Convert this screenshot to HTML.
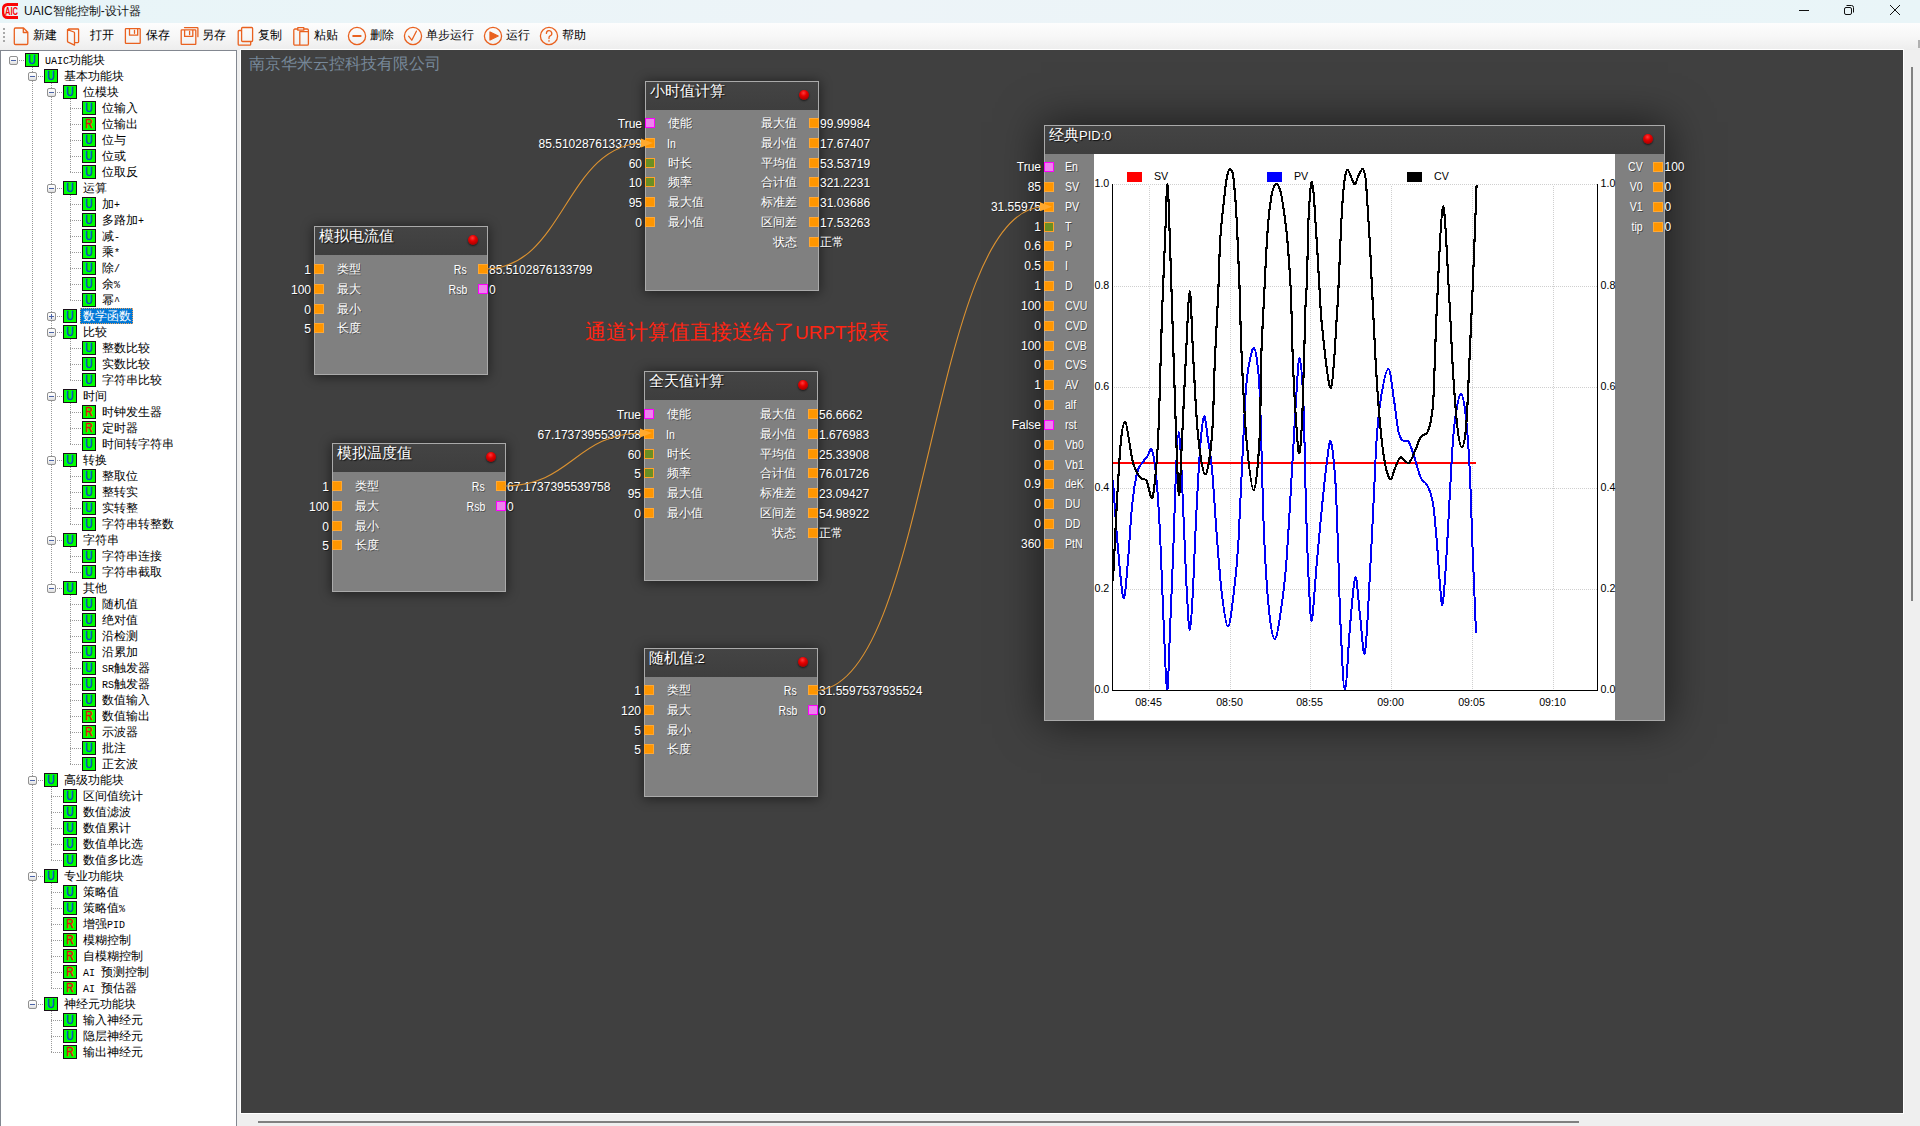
<!DOCTYPE html>
<html><head><meta charset="utf-8"><title>UAIC</title><style>
*{box-sizing:border-box;margin:0;padding:0}
html,body{width:1920px;height:1126px;overflow:hidden;background:#efefef;font-family:"Liberation Sans",sans-serif;font-size:12px;color:#000}
.abs{position:absolute}
#title{position:absolute;left:0;top:0;width:1920px;height:23px;background:linear-gradient(90deg,#e8f5f8,#edf4f8 45%,#e9f5f8)}
#title .t{position:absolute;top:4px;font-size:12px;line-height:15px;color:#111;white-space:nowrap}
#tb{position:absolute;left:0;top:23px;width:1920px;height:27px;background:linear-gradient(#fdfdfd,#f7f7f7 50%,#ededed)}
#tb .l{position:absolute;top:5px;font-size:12px;line-height:15px;color:#000;white-space:nowrap}
#tree{position:absolute;left:0;top:50px;width:237px;height:1080px;background:#fff;border:1px solid #828790}
.tr span{font-family:"Liberation Mono",monospace;font-size:10px}
.tr{position:absolute;height:16px;line-height:16px;font-size:12px;white-space:nowrap;color:#000}
.ic{position:absolute;width:14px;height:14px;background:#00ff00;border:1px solid #1a0f1a;color:#0a46c8;overflow:hidden}
.ic span{display:block;width:12px;font-size:13px;line-height:12px;text-align:center;transform:scaleX(.8);-webkit-text-stroke:.55px}
.ic.r{color:#e01010}
.ex{position:absolute;width:9px;height:9px;border:1px solid #919191;border-radius:2px;background:linear-gradient(#fff,#f4f4f4 50%,#dedede)}
.ex i{position:absolute;left:1px;top:3px;width:5px;height:1px;background:#4b63a7}
.ex b{position:absolute;left:3px;top:1px;width:1px;height:5px;background:#4b63a7}
#cv{position:absolute;left:240px;top:49px;width:1664px;height:1065px;border:1px solid #fff;background:#404040}
.node{position:absolute;border:1px solid #aaa;background:#808080;box-shadow:0 1px 11px 1px rgba(0,0,0,.48)}
.node .hd{position:absolute;left:0;top:0;right:0;height:28px;background:linear-gradient(#444,#3e3e3e)}
.nt{position:absolute;color:#fff;font-size:14.67px;line-height:18px;white-space:nowrap;text-shadow:1px 1px 1px rgba(0,0,0,.8)}
.ball{position:absolute;width:10px;height:10px;border-radius:50%;background:radial-gradient(circle at 45% 30%,#ff3a3a 0,#e60000 35%,#a80000 75%,#7a0000 100%);box-shadow:0 1px 2px rgba(0,0,0,.6)}
.p{position:absolute;width:10px;height:10px;background:#ff9600;border:1px solid #ffa834}
.p.m{background:#ee82ee;border-color:#ff00ff}
.p.g{background:#6b8e23;border-color:#ffa22c}
.tx{position:absolute;color:#fff;font-size:12px;line-height:14px;white-space:nowrap;text-shadow:1px 1px 0 rgba(0,0,0,.45)}
.tx.r{text-align:right}
.j{text-align-last:justify;text-justify:inter-character}
.tx.n{transform:scaleX(.88);transform-origin:0 50%}
.tx.n.r{transform-origin:100% 50%}
.nt span{font-size:13px}
</style></head><body>
<div id="title">
<svg class="abs" style="left:0;top:0" width="22" height="23" viewBox="0 0 22 23"><path d="M18 3H7.5A5.500 5.500 0 0 0 2 8.500V13.500A5.500 5.500 0 0 0 7.500 19H18V16H8A3.700 3.700 0 0 1 4.300 12.500V9.500A3.700 3.700 0 0 1 8 6H18z" fill="#fa0505"/><text x="5" y="14.700" font-family="Liberation Sans, sans-serif" font-size="10.500" font-weight="bold" fill="#fa0505" textLength="13" lengthAdjust="spacingAndGlyphs">AIC</text></svg>
<div class="t j" style="left:24px;width:116.67px">UAIC智能控制-设计器</div>
<svg class="abs" style="left:1780px;top:0" width="140" height="23" viewBox="0 0 140 23" fill="none" stroke="#111" stroke-width="1"><path d="M19 10.5h10"/><rect x="64.5" y="7.5" width="7" height="7" rx="1.5"/><path d="M66.5 5.5h5a2 2 0 0 1 2 2v5"/><path d="M110 5l10 10M120 5l-10 10"/></svg>
</div>
<div id="tb">
<svg class="abs" style="left:0;top:0" width="10" height="27"><g fill="#a8a8a8"><rect x="3" y="5" width="2" height="2"/><rect x="3" y="9" width="2" height="2"/><rect x="3" y="13" width="2" height="2"/><rect x="3" y="17" width="2" height="2"/></g></svg>
<svg class="abs" style="left:0;top:0" width="620" height="27" viewBox="0 23 620 27" fill="none" stroke="#e9611f" stroke-width="1.3" stroke-linejoin="round" stroke-linecap="round">
<path d="M15.5 28h8l4.3 4.3v11a1.2 1.2 0 0 1-1.2 1.2h-11.1a1.2 1.2 0 0 1-1.2-1.2v-14.1a1.2 1.2 0 0 1 1.2-1.2zM23.3 28.2v4.3h4.3"/>
<path d="M68.5 29h9.3a.8.8 0 0 1 .8.8v12a.8.8 0 0 1-.8.8h-3.3M67.5 29.6l6.4 2.4a.9.9 0 0 1 .6.8v12.4l-6.4-3a1 1 0 0 1-.6-.9z"/>
<path d="M126 28.6h13.6a.6.6 0 0 1 .6.6v13.6a.6.6 0 0 1-.6.6h-13.600a.6.6 0 0 1-.6-.6v-13.600a.6.6 0 0 1 .6-.6zM129.500 28.800v6.400h8.200v-6.400M134.500 30.300v3"/>
<path d="M181.800 29.800h13.400a.6.6 0 0 1 .6.600v13.400a.6.6 0 0 1-.6.600h-13.400a.6.6 0 0 1-.6-.6v-13.400a.6.6 0 0 1 .6-.6zM184.600 30v6.400h8.200v-6.400M189.600 31.500v3M184.500 27.600h12.800a.6.6 0 0 1 .6.600v8.500" />
<path d="M241.400 30.500h-2.200a1 1 0 0 0-1 1v12.700a1 1 0 0 0 1 1h10.500a1 1 0 0 0 1-1v-2.300M242.600 27.500h9a1 1 0 0 1 1 1v12a1 1 0 0 1-1 1h-9a1 1 0 0 1-1-1v-12a1 1 0 0 1 1-1z"/>
<path d="M297.600 29h-2.600a1.200 1.200 0 0 0-1.200 1.200v13.800a1.200 1.200 0 0 0 1.200 1.200h12.200a1.200 1.200 0 0 0 1.200-1.200v-13.800a1.200 1.200 0 0 0-1.200-1.200h-3M297.800 27.600h6v2.600h-6zM299.800 45v-13.400h8.400"/>
<circle cx="357" cy="36" r="8.6"/><path d="M353.200 36h7.400" stroke-width="2"/>
<circle cx="413" cy="36" r="8.600"/><path d="M408.600 36.200l3.200 4 4.600-9"/>
<circle cx="493" cy="36" r="8.600"/><path d="M490 32v8l8.200-4z" fill="#e9611f"/>
<circle cx="549" cy="36" r="8.600"/><path d="M546.400 33.400a2.700 2.700 0 1 1 3.700 2.500c-.8.400-1.100.9-1.100 1.800v.8M549 40.600v.6"/>
</svg>
<div class="l j" style="left:33px;width:24px">新建</div>
<div class="l j" style="left:89.5px;width:24px">打开</div>
<div class="l j" style="left:146px;width:24px">保存</div>
<div class="l j" style="left:202px;width:24px">另存</div>
<div class="l j" style="left:258px;width:24px">复制</div>
<div class="l j" style="left:313.5px;width:24px">粘贴</div>
<div class="l j" style="left:370px;width:24px">删除</div>
<div class="l j" style="left:426px;width:48px">单步运行</div>
<div class="l j" style="left:506px;width:24px">运行</div>
<div class="l j" style="left:562px;width:24px">帮助</div>
<div class="abs" style="left:1918px;top:17px;width:2px;height:8px;background:#b0b0b0"></div>
</div>
<div id="tree">
<svg class="abs" style="left:0;top:0" width="235" height="1074" fill="none" stroke="#9a9a9a" stroke-width="1" stroke-dasharray="1 1" shape-rendering="crispEdges"><path d="M18 9.5H23"/><path d="M31.5 16V954"/><path d="M37 25.5H42"/><path d="M50.5 32V538"/><path d="M56 41.5H61"/><path d="M69.5 48V122"/><path d="M69 57.5H80"/><path d="M69 73.5H80"/><path d="M69 89.5H80"/><path d="M69 105.5H80"/><path d="M69 121.5H80"/><path d="M56 137.5H61"/><path d="M69.5 144V250"/><path d="M69 153.5H80"/><path d="M69 169.5H80"/><path d="M69 185.5H80"/><path d="M69 201.5H80"/><path d="M69 217.5H80"/><path d="M69 233.5H80"/><path d="M69 249.5H80"/><path d="M56 265.5H61"/><path d="M56 281.5H61"/><path d="M69.5 288V330"/><path d="M69 297.5H80"/><path d="M69 313.5H80"/><path d="M69 329.5H80"/><path d="M56 345.5H61"/><path d="M69.5 352V394"/><path d="M69 361.5H80"/><path d="M69 377.5H80"/><path d="M69 393.5H80"/><path d="M56 409.5H61"/><path d="M69.5 416V474"/><path d="M69 425.5H80"/><path d="M69 441.5H80"/><path d="M69 457.5H80"/><path d="M69 473.5H80"/><path d="M56 489.5H61"/><path d="M69.5 496V522"/><path d="M69 505.5H80"/><path d="M69 521.5H80"/><path d="M56 537.5H61"/><path d="M69.5 544V714"/><path d="M69 553.5H80"/><path d="M69 569.5H80"/><path d="M69 585.5H80"/><path d="M69 601.5H80"/><path d="M69 617.5H80"/><path d="M69 633.5H80"/><path d="M69 649.5H80"/><path d="M69 665.5H80"/><path d="M69 681.5H80"/><path d="M69 697.5H80"/><path d="M69 713.5H80"/><path d="M37 729.5H42"/><path d="M50.5 736V810"/><path d="M50 745.5H61"/><path d="M50 761.5H61"/><path d="M50 777.5H61"/><path d="M50 793.5H61"/><path d="M50 809.5H61"/><path d="M37 825.5H42"/><path d="M50.5 832V938"/><path d="M50 841.5H61"/><path d="M50 857.5H61"/><path d="M50 873.5H61"/><path d="M50 889.5H61"/><path d="M50 905.5H61"/><path d="M50 921.5H61"/><path d="M50 937.5H61"/><path d="M37 953.5H42"/><path d="M50.5 960V1002"/><path d="M50 969.5H61"/><path d="M50 985.5H61"/><path d="M50 1001.5H61"/></svg>
<div class="ex" style="left:8px;top:5px"><i></i></div>
<div class="ic" style="left:24px;top:2px"><span>U</span></div>
<div class="tr j" style="left:44px;top:1px;width:60.02px"><span>UAIC</span>功能块</div>
<div class="ex" style="left:27px;top:21px"><i></i></div>
<div class="ic" style="left:43px;top:18px"><span>U</span></div>
<div class="tr j" style="left:63px;top:17px;width:60px">基本功能块</div>
<div class="ex" style="left:46px;top:37px"><i></i></div>
<div class="ic" style="left:62px;top:34px"><span>U</span></div>
<div class="tr j" style="left:82px;top:33px;width:36px">位模块</div>
<div class="ic" style="left:81px;top:50px"><span>U</span></div>
<div class="tr j" style="left:101px;top:49px;width:36px">位输入</div>
<div class="ic r" style="left:81px;top:66px"><span>R</span></div>
<div class="tr j" style="left:101px;top:65px;width:36px">位输出</div>
<div class="ic" style="left:81px;top:82px"><span>U</span></div>
<div class="tr j" style="left:101px;top:81px;width:24px">位与</div>
<div class="ic" style="left:81px;top:98px"><span>U</span></div>
<div class="tr j" style="left:101px;top:97px;width:24px">位或</div>
<div class="ic" style="left:81px;top:114px"><span>U</span></div>
<div class="tr j" style="left:101px;top:113px;width:36px">位取反</div>
<div class="ex" style="left:46px;top:133px"><i></i></div>
<div class="ic" style="left:62px;top:130px"><span>U</span></div>
<div class="tr j" style="left:82px;top:129px;width:24px">运算</div>
<div class="ic" style="left:81px;top:146px"><span>U</span></div>
<div class="tr j" style="left:101px;top:145px;width:18.02px">加<span>+</span></div>
<div class="ic" style="left:81px;top:162px"><span>U</span></div>
<div class="tr j" style="left:101px;top:161px;width:42.02px">多路加<span>+</span></div>
<div class="ic" style="left:81px;top:178px"><span>U</span></div>
<div class="tr j" style="left:101px;top:177px;width:18.02px">减<span>-</span></div>
<div class="ic" style="left:81px;top:194px"><span>U</span></div>
<div class="tr j" style="left:101px;top:193px;width:18.02px">乘<span>*</span></div>
<div class="ic" style="left:81px;top:210px"><span>U</span></div>
<div class="tr j" style="left:101px;top:209px;width:18.02px">除<span>/</span></div>
<div class="ic" style="left:81px;top:226px"><span>U</span></div>
<div class="tr j" style="left:101px;top:225px;width:18.02px">余<span>%</span></div>
<div class="ic" style="left:81px;top:242px"><span>U</span></div>
<div class="tr j" style="left:101px;top:241px;width:18.02px">幂<span>^</span></div>
<div class="ex" style="left:46px;top:261px"><i></i><b></b></div>
<div class="ic" style="left:62px;top:258px"><span>U</span></div>
<div class="tr j" style="left:79px;top:257px;padding:0 2px 0 3px;background:#0078d7;color:#fff;outline:1px dotted #e8a060;outline-offset:-1px;width:53px">数学函数</div>
<div class="ex" style="left:46px;top:277px"><i></i></div>
<div class="ic" style="left:62px;top:274px"><span>U</span></div>
<div class="tr j" style="left:82px;top:273px;width:24px">比较</div>
<div class="ic" style="left:81px;top:290px"><span>U</span></div>
<div class="tr j" style="left:101px;top:289px;width:48px">整数比较</div>
<div class="ic" style="left:81px;top:306px"><span>U</span></div>
<div class="tr j" style="left:101px;top:305px;width:48px">实数比较</div>
<div class="ic" style="left:81px;top:322px"><span>U</span></div>
<div class="tr j" style="left:101px;top:321px;width:60px">字符串比较</div>
<div class="ex" style="left:46px;top:341px"><i></i></div>
<div class="ic" style="left:62px;top:338px"><span>U</span></div>
<div class="tr j" style="left:82px;top:337px;width:24px">时间</div>
<div class="ic r" style="left:81px;top:354px"><span>R</span></div>
<div class="tr j" style="left:101px;top:353px;width:60px">时钟发生器</div>
<div class="ic r" style="left:81px;top:370px"><span>R</span></div>
<div class="tr j" style="left:101px;top:369px;width:36px">定时器</div>
<div class="ic" style="left:81px;top:386px"><span>U</span></div>
<div class="tr j" style="left:101px;top:385px;width:72px">时间转字符串</div>
<div class="ex" style="left:46px;top:405px"><i></i></div>
<div class="ic" style="left:62px;top:402px"><span>U</span></div>
<div class="tr j" style="left:82px;top:401px;width:24px">转换</div>
<div class="ic" style="left:81px;top:418px"><span>U</span></div>
<div class="tr j" style="left:101px;top:417px;width:36px">整取位</div>
<div class="ic" style="left:81px;top:434px"><span>U</span></div>
<div class="tr j" style="left:101px;top:433px;width:36px">整转实</div>
<div class="ic" style="left:81px;top:450px"><span>U</span></div>
<div class="tr j" style="left:101px;top:449px;width:36px">实转整</div>
<div class="ic" style="left:81px;top:466px"><span>U</span></div>
<div class="tr j" style="left:101px;top:465px;width:72px">字符串转整数</div>
<div class="ex" style="left:46px;top:485px"><i></i></div>
<div class="ic" style="left:62px;top:482px"><span>U</span></div>
<div class="tr j" style="left:82px;top:481px;width:36px">字符串</div>
<div class="ic" style="left:81px;top:498px"><span>U</span></div>
<div class="tr j" style="left:101px;top:497px;width:60px">字符串连接</div>
<div class="ic" style="left:81px;top:514px"><span>U</span></div>
<div class="tr j" style="left:101px;top:513px;width:60px">字符串截取</div>
<div class="ex" style="left:46px;top:533px"><i></i></div>
<div class="ic" style="left:62px;top:530px"><span>U</span></div>
<div class="tr j" style="left:82px;top:529px;width:24px">其他</div>
<div class="ic" style="left:81px;top:546px"><span>U</span></div>
<div class="tr j" style="left:101px;top:545px;width:36px">随机值</div>
<div class="ic" style="left:81px;top:562px"><span>U</span></div>
<div class="tr j" style="left:101px;top:561px;width:36px">绝对值</div>
<div class="ic" style="left:81px;top:578px"><span>U</span></div>
<div class="tr j" style="left:101px;top:577px;width:36px">沿检测</div>
<div class="ic" style="left:81px;top:594px"><span>U</span></div>
<div class="tr j" style="left:101px;top:593px;width:36px">沿累加</div>
<div class="ic" style="left:81px;top:610px"><span>U</span></div>
<div class="tr j" style="left:101px;top:609px;width:48.02px"><span>SR</span>触发器</div>
<div class="ic" style="left:81px;top:626px"><span>U</span></div>
<div class="tr j" style="left:101px;top:625px;width:48.02px"><span>RS</span>触发器</div>
<div class="ic" style="left:81px;top:642px"><span>U</span></div>
<div class="tr j" style="left:101px;top:641px;width:48px">数值输入</div>
<div class="ic r" style="left:81px;top:658px"><span>R</span></div>
<div class="tr j" style="left:101px;top:657px;width:48px">数值输出</div>
<div class="ic r" style="left:81px;top:674px"><span>R</span></div>
<div class="tr j" style="left:101px;top:673px;width:36px">示波器</div>
<div class="ic" style="left:81px;top:690px"><span>U</span></div>
<div class="tr j" style="left:101px;top:689px;width:24px">批注</div>
<div class="ic" style="left:81px;top:706px"><span>U</span></div>
<div class="tr j" style="left:101px;top:705px;width:36px">正玄波</div>
<div class="ex" style="left:27px;top:725px"><i></i></div>
<div class="ic" style="left:43px;top:722px"><span>U</span></div>
<div class="tr j" style="left:63px;top:721px;width:60px">高级功能块</div>
<div class="ic" style="left:62px;top:738px"><span>U</span></div>
<div class="tr j" style="left:82px;top:737px;width:60px">区间值统计</div>
<div class="ic" style="left:62px;top:754px"><span>U</span></div>
<div class="tr j" style="left:82px;top:753px;width:48px">数值滤波</div>
<div class="ic" style="left:62px;top:770px"><span>U</span></div>
<div class="tr j" style="left:82px;top:769px;width:48px">数值累计</div>
<div class="ic" style="left:62px;top:786px"><span>U</span></div>
<div class="tr j" style="left:82px;top:785px;width:60px">数值单比选</div>
<div class="ic" style="left:62px;top:802px"><span>U</span></div>
<div class="tr j" style="left:82px;top:801px;width:60px">数值多比选</div>
<div class="ex" style="left:27px;top:821px"><i></i></div>
<div class="ic" style="left:43px;top:818px"><span>U</span></div>
<div class="tr j" style="left:63px;top:817px;width:60px">专业功能块</div>
<div class="ic" style="left:62px;top:834px"><span>U</span></div>
<div class="tr j" style="left:82px;top:833px;width:36px">策略值</div>
<div class="ic" style="left:62px;top:850px"><span>U</span></div>
<div class="tr j" style="left:82px;top:849px;width:42.02px">策略值<span>%</span></div>
<div class="ic r" style="left:62px;top:866px"><span>R</span></div>
<div class="tr j" style="left:82px;top:865px;width:42.02px">增强<span>PID</span></div>
<div class="ic r" style="left:62px;top:882px"><span>R</span></div>
<div class="tr j" style="left:82px;top:881px;width:48px">模糊控制</div>
<div class="ic r" style="left:62px;top:898px"><span>R</span></div>
<div class="tr j" style="left:82px;top:897px;width:60px">自模糊控制</div>
<div class="ic r" style="left:62px;top:914px"><span>R</span></div>
<div class="tr j" style="left:82px;top:913px;width:66.02px"><span>AI </span>预测控制</div>
<div class="ic r" style="left:62px;top:930px"><span>R</span></div>
<div class="tr j" style="left:82px;top:929px;width:54.02px"><span>AI </span>预估器</div>
<div class="ex" style="left:27px;top:949px"><i></i></div>
<div class="ic" style="left:43px;top:946px"><span>U</span></div>
<div class="tr j" style="left:63px;top:945px;width:72px">神经元功能块</div>
<div class="ic" style="left:62px;top:962px"><span>U</span></div>
<div class="tr j" style="left:82px;top:961px;width:60px">输入神经元</div>
<div class="ic" style="left:62px;top:978px"><span>U</span></div>
<div class="tr j" style="left:82px;top:977px;width:60px">隐层神经元</div>
<div class="ic r" style="left:62px;top:994px"><span>R</span></div>
<div class="tr j" style="left:82px;top:993px;width:60px">输出神经元</div>
</div>
<div id="cv"></div>
<div class="abs j" style="left:249px;top:54px;font-size:16px;line-height:19px;color:#778899;white-space:nowrap;width:192px">南京华米云控科技有限公司</div>
<div class="abs j" style="left:585px;top:320px;font-size:20.500px;line-height:24px;color:#ff2412;white-space:nowrap;width:303.73px">通道计算值直接送给了<span style="font-size:19px">URPT</span>报表</div>
<div class="node" style="left:645px;top:81px;width:174px;height:210px"><div class="hd"></div></div>
<div class="nt j" style="left:650px;top:82px;width:75px">小时值计算</div>
<div class="ball" style="left:798.5px;top:90px"></div>
<div class="p m" style="left:645px;top:118px"></div>
<div class="tx c j" style="left:667.5px;top:116px;width:24px">使能</div>
<div class="tx r" style="right:1278px;top:117px">True</div>
<div class="p" style="left:645px;top:138px"></div>
<div class="tx n" style="left:667px;top:137px">In</div>
<div class="tx r" style="right:1278px;top:137px">85.5102876133799</div>
<div class="p g" style="left:645px;top:158px"></div>
<div class="tx c j" style="left:667.5px;top:156px;width:24px">时长</div>
<div class="tx r" style="right:1278px;top:157px">60</div>
<div class="p g" style="left:645px;top:177px"></div>
<div class="tx c j" style="left:667.5px;top:175px;width:24px">频率</div>
<div class="tx r" style="right:1278px;top:176px">10</div>
<div class="p" style="left:645px;top:197px"></div>
<div class="tx c j" style="left:667.5px;top:195px;width:36px">最大值</div>
<div class="tx r" style="right:1278px;top:196px">95</div>
<div class="p" style="left:645px;top:217px"></div>
<div class="tx c j" style="left:667.5px;top:215px;width:36px">最小值</div>
<div class="tx r" style="right:1278px;top:216px">0</div>
<div class="p" style="left:809px;top:118px"></div>
<div class="tx r c j" style="right:1123px;top:116px;width:36px">最大值</div>
<div class="tx" style="left:820px;top:117px">99.99984</div>
<div class="p" style="left:809px;top:138px"></div>
<div class="tx r c j" style="right:1123px;top:136px;width:36px">最小值</div>
<div class="tx" style="left:820px;top:137px">17.67407</div>
<div class="p" style="left:809px;top:158px"></div>
<div class="tx r c j" style="right:1123px;top:156px;width:36px">平均值</div>
<div class="tx" style="left:820px;top:157px">53.53719</div>
<div class="p" style="left:809px;top:177px"></div>
<div class="tx r c j" style="right:1123px;top:175px;width:36px">合计值</div>
<div class="tx" style="left:820px;top:176px">321.2231</div>
<div class="p" style="left:809px;top:197px"></div>
<div class="tx r c j" style="right:1123px;top:195px;width:36px">标准差</div>
<div class="tx" style="left:820px;top:196px">31.03686</div>
<div class="p" style="left:809px;top:217px"></div>
<div class="tx r c j" style="right:1123px;top:215px;width:36px">区间差</div>
<div class="tx" style="left:820px;top:216px">17.53263</div>
<div class="p" style="left:809px;top:237px"></div>
<div class="tx r c j" style="right:1123px;top:235px;width:24px">状态</div>
<div class="tx c j" style="left:820px;top:235px;width:24px">正常</div>
<div class="node" style="left:314px;top:226px;width:174px;height:149px"><div class="hd"></div></div>
<div class="nt j" style="left:319px;top:227px;width:75px">模拟电流值</div>
<div class="ball" style="left:467.5px;top:235px"></div>
<div class="p" style="left:314px;top:264px"></div>
<div class="tx c j" style="left:336.5px;top:262px;width:24px">类型</div>
<div class="tx r" style="right:1609px;top:263px">1</div>
<div class="p" style="left:314px;top:284px"></div>
<div class="tx c j" style="left:336.5px;top:282px;width:24px">最大</div>
<div class="tx r" style="right:1609px;top:283px">100</div>
<div class="p" style="left:314px;top:304px"></div>
<div class="tx c j" style="left:336.5px;top:302px;width:24px">最小</div>
<div class="tx r" style="right:1609px;top:303px">0</div>
<div class="p" style="left:314px;top:323px"></div>
<div class="tx c j" style="left:336.5px;top:321px;width:24px">长度</div>
<div class="tx r" style="right:1609px;top:322px">5</div>
<div class="p" style="left:478px;top:264px"></div>
<div class="tx r n" style="right:1453px;top:263px">Rs</div>
<div class="tx" style="left:489px;top:263px">85.5102876133799</div>
<div class="p m" style="left:478px;top:284px"></div>
<div class="tx r n" style="right:1453px;top:283px">Rsb</div>
<div class="tx" style="left:489px;top:283px">0</div>
<div class="node" style="left:332px;top:443px;width:174px;height:149px"><div class="hd"></div></div>
<div class="nt j" style="left:337px;top:444px;width:75px">模拟温度值</div>
<div class="ball" style="left:485.5px;top:452px"></div>
<div class="p" style="left:332px;top:481px"></div>
<div class="tx c j" style="left:354.5px;top:479px;width:24px">类型</div>
<div class="tx r" style="right:1591px;top:480px">1</div>
<div class="p" style="left:332px;top:501px"></div>
<div class="tx c j" style="left:354.5px;top:499px;width:24px">最大</div>
<div class="tx r" style="right:1591px;top:500px">100</div>
<div class="p" style="left:332px;top:521px"></div>
<div class="tx c j" style="left:354.5px;top:519px;width:24px">最小</div>
<div class="tx r" style="right:1591px;top:520px">0</div>
<div class="p" style="left:332px;top:540px"></div>
<div class="tx c j" style="left:354.5px;top:538px;width:24px">长度</div>
<div class="tx r" style="right:1591px;top:539px">5</div>
<div class="p" style="left:496px;top:481px"></div>
<div class="tx r n" style="right:1435px;top:480px">Rs</div>
<div class="tx" style="left:507px;top:480px">67.1737395539758</div>
<div class="p m" style="left:496px;top:501px"></div>
<div class="tx r n" style="right:1435px;top:500px">Rsb</div>
<div class="tx" style="left:507px;top:500px">0</div>
<div class="node" style="left:644px;top:371px;width:174px;height:210px"><div class="hd"></div></div>
<div class="nt j" style="left:649px;top:372px;width:75px">全天值计算</div>
<div class="ball" style="left:797.5px;top:380px"></div>
<div class="p m" style="left:644px;top:409px"></div>
<div class="tx c j" style="left:666.5px;top:407px;width:24px">使能</div>
<div class="tx r" style="right:1279px;top:408px">True</div>
<div class="p" style="left:644px;top:429px"></div>
<div class="tx n" style="left:666px;top:428px">In</div>
<div class="tx r" style="right:1279px;top:428px">67.1737395539758</div>
<div class="p g" style="left:644px;top:449px"></div>
<div class="tx c j" style="left:666.5px;top:447px;width:24px">时长</div>
<div class="tx r" style="right:1279px;top:448px">60</div>
<div class="p g" style="left:644px;top:468px"></div>
<div class="tx c j" style="left:666.5px;top:466px;width:24px">频率</div>
<div class="tx r" style="right:1279px;top:467px">5</div>
<div class="p" style="left:644px;top:488px"></div>
<div class="tx c j" style="left:666.5px;top:486px;width:36px">最大值</div>
<div class="tx r" style="right:1279px;top:487px">95</div>
<div class="p" style="left:644px;top:508px"></div>
<div class="tx c j" style="left:666.5px;top:506px;width:36px">最小值</div>
<div class="tx r" style="right:1279px;top:507px">0</div>
<div class="p" style="left:808px;top:409px"></div>
<div class="tx r c j" style="right:1124px;top:407px;width:36px">最大值</div>
<div class="tx" style="left:819px;top:408px">56.6662</div>
<div class="p" style="left:808px;top:429px"></div>
<div class="tx r c j" style="right:1124px;top:427px;width:36px">最小值</div>
<div class="tx" style="left:819px;top:428px">1.676983</div>
<div class="p" style="left:808px;top:449px"></div>
<div class="tx r c j" style="right:1124px;top:447px;width:36px">平均值</div>
<div class="tx" style="left:819px;top:448px">25.33908</div>
<div class="p" style="left:808px;top:468px"></div>
<div class="tx r c j" style="right:1124px;top:466px;width:36px">合计值</div>
<div class="tx" style="left:819px;top:467px">76.01726</div>
<div class="p" style="left:808px;top:488px"></div>
<div class="tx r c j" style="right:1124px;top:486px;width:36px">标准差</div>
<div class="tx" style="left:819px;top:487px">23.09427</div>
<div class="p" style="left:808px;top:508px"></div>
<div class="tx r c j" style="right:1124px;top:506px;width:36px">区间差</div>
<div class="tx" style="left:819px;top:507px">54.98922</div>
<div class="p" style="left:808px;top:528px"></div>
<div class="tx r c j" style="right:1124px;top:526px;width:24px">状态</div>
<div class="tx c j" style="left:819px;top:526px;width:24px">正常</div>
<div class="node" style="left:644px;top:648px;width:174px;height:149px"><div class="hd"></div></div>
<div class="nt j" style="left:649px;top:649px;width:55.84px">随机值<span>:2</span></div>
<div class="ball" style="left:797.5px;top:657px"></div>
<div class="p" style="left:644px;top:685px"></div>
<div class="tx c j" style="left:666.5px;top:683px;width:24px">类型</div>
<div class="tx r" style="right:1279px;top:684px">1</div>
<div class="p" style="left:644px;top:705px"></div>
<div class="tx c j" style="left:666.5px;top:703px;width:24px">最大</div>
<div class="tx r" style="right:1279px;top:704px">120</div>
<div class="p" style="left:644px;top:725px"></div>
<div class="tx c j" style="left:666.5px;top:723px;width:24px">最小</div>
<div class="tx r" style="right:1279px;top:724px">5</div>
<div class="p" style="left:644px;top:744px"></div>
<div class="tx c j" style="left:666.5px;top:742px;width:24px">长度</div>
<div class="tx r" style="right:1279px;top:743px">5</div>
<div class="p" style="left:808px;top:685px"></div>
<div class="tx r n" style="right:1123px;top:684px">Rs</div>
<div class="tx" style="left:819px;top:684px">31.5597537935524</div>
<div class="p m" style="left:808px;top:705px"></div>
<div class="tx r n" style="right:1123px;top:704px">Rsb</div>
<div class="tx" style="left:819px;top:704px">0</div>
<div class="node" style="left:1044px;top:125px;width:621px;height:596px;box-shadow:0 0 40px 3px rgba(0,0,0,.55)"><div class="hd"></div></div>
<div class="nt j" style="left:1049px;top:126px;width:62.52px">经典<span>PID:0</span></div>
<div class="ball" style="left:1643px;top:134px"></div>
<div class="p m" style="left:1044px;top:162px"></div>
<div class="tx n" style="left:1065px;top:160px">En</div>
<div class="tx r" style="right:879px;top:160px">True</div>
<div class="p" style="left:1044px;top:182px"></div>
<div class="tx n" style="left:1065px;top:180px">SV</div>
<div class="tx r" style="right:879px;top:180px">85</div>
<div class="p" style="left:1044px;top:202px"></div>
<div class="tx n" style="left:1065px;top:200px">PV</div>
<div class="tx r" style="right:879px;top:200px">31.55975</div>
<div class="p g" style="left:1044px;top:222px"></div>
<div class="tx n" style="left:1065px;top:220px">T</div>
<div class="tx r" style="right:879px;top:220px">1</div>
<div class="p" style="left:1044px;top:241px"></div>
<div class="tx n" style="left:1065px;top:239px">P</div>
<div class="tx r" style="right:879px;top:239px">0.6</div>
<div class="p" style="left:1044px;top:261px"></div>
<div class="tx n" style="left:1065px;top:259px">I</div>
<div class="tx r" style="right:879px;top:259px">0.5</div>
<div class="p" style="left:1044px;top:281px"></div>
<div class="tx n" style="left:1065px;top:279px">D</div>
<div class="tx r" style="right:879px;top:279px">1</div>
<div class="p" style="left:1044px;top:301px"></div>
<div class="tx n" style="left:1065px;top:299px">CVU</div>
<div class="tx r" style="right:879px;top:299px">100</div>
<div class="p" style="left:1044px;top:321px"></div>
<div class="tx n" style="left:1065px;top:319px">CVD</div>
<div class="tx r" style="right:879px;top:319px">0</div>
<div class="p" style="left:1044px;top:341px"></div>
<div class="tx n" style="left:1065px;top:339px">CVB</div>
<div class="tx r" style="right:879px;top:339px">100</div>
<div class="p" style="left:1044px;top:360px"></div>
<div class="tx n" style="left:1065px;top:358px">CVS</div>
<div class="tx r" style="right:879px;top:358px">0</div>
<div class="p" style="left:1044px;top:380px"></div>
<div class="tx n" style="left:1065px;top:378px">AV</div>
<div class="tx r" style="right:879px;top:378px">1</div>
<div class="p" style="left:1044px;top:400px"></div>
<div class="tx n" style="left:1065px;top:398px">alf</div>
<div class="tx r" style="right:879px;top:398px">0</div>
<div class="p m" style="left:1044px;top:420px"></div>
<div class="tx n" style="left:1065px;top:418px">rst</div>
<div class="tx r" style="right:879px;top:418px">False</div>
<div class="p" style="left:1044px;top:440px"></div>
<div class="tx n" style="left:1065px;top:438px">Vb0</div>
<div class="tx r" style="right:879px;top:438px">0</div>
<div class="p" style="left:1044px;top:460px"></div>
<div class="tx n" style="left:1065px;top:458px">Vb1</div>
<div class="tx r" style="right:879px;top:458px">0</div>
<div class="p" style="left:1044px;top:479px"></div>
<div class="tx n" style="left:1065px;top:477px">deK</div>
<div class="tx r" style="right:879px;top:477px">0.9</div>
<div class="p" style="left:1044px;top:499px"></div>
<div class="tx n" style="left:1065px;top:497px">DU</div>
<div class="tx r" style="right:879px;top:497px">0</div>
<div class="p" style="left:1044px;top:519px"></div>
<div class="tx n" style="left:1065px;top:517px">DD</div>
<div class="tx r" style="right:879px;top:517px">0</div>
<div class="p" style="left:1044px;top:539px"></div>
<div class="tx n" style="left:1065px;top:537px">PtN</div>
<div class="tx r" style="right:879px;top:537px">360</div>
<div class="p" style="left:1653px;top:162px"></div>
<div class="tx r n" style="right:277.5px;top:160px">CV</div>
<div class="tx" style="left:1664.5px;top:160px">100</div>
<div class="p" style="left:1653px;top:182px"></div>
<div class="tx r n" style="right:277.5px;top:180px">V0</div>
<div class="tx" style="left:1664.5px;top:180px">0</div>
<div class="p" style="left:1653px;top:202px"></div>
<div class="tx r n" style="right:277.5px;top:200px">V1</div>
<div class="tx" style="left:1664.5px;top:200px">0</div>
<div class="p" style="left:1653px;top:222px"></div>
<div class="tx r n" style="right:277.5px;top:220px">tip</div>
<div class="tx" style="left:1664.5px;top:220px">0</div>
<svg class="abs" style="left:0;top:0" width="1920" height="1126" font-family="Liberation Sans, sans-serif"><rect x="1094" y="154" width="521" height="566" fill="#fff"/><path d="M1113.5 589.5H1597.5M1113.5 488.5H1597.5M1113.5 387.5H1597.5M1113.5 286.5H1597.5M1113.5 184.5H1597.5M1149.5 185.5V690.5M1230.5 185.5V690.5M1310.5 185.5V690.5M1391.5 185.5V690.5M1472.5 185.5V690.5M1553.5 185.5V690.5" stroke="#cfcfcf" stroke-width="1" stroke-dasharray="1 1" fill="none" shape-rendering="crispEdges"/><clipPath id="cp"><rect x="1112.5" y="154" width="485.0" height="538.3"/></clipPath><g clip-path="url(#cp)" fill="none" stroke-linejoin="round" shape-rendering="crispEdges"><path d="M1113 463H1476" stroke="#f00" stroke-width="2"/><path d="M1113.0 480.0C1113.7 490.0 1115.6 520.4 1117.3 540.0C1119.0 559.6 1121.6 594.4 1123.4 597.7C1125.2 601.0 1126.6 575.2 1128.0 560.0C1129.4 544.8 1130.5 521.3 1132.0 506.6C1133.5 491.9 1135.5 479.3 1137.3 472.0C1139.1 464.7 1140.9 465.3 1142.6 462.6C1144.3 459.9 1145.9 458.1 1147.5 456.0C1149.1 453.9 1150.5 446.0 1152.0 450.0C1153.5 454.0 1155.2 466.2 1156.5 480.0C1157.8 493.8 1158.8 509.7 1160.0 533.0C1161.2 556.3 1162.3 593.8 1163.5 620.0C1164.7 646.2 1166.0 688.3 1167.1 690.0C1168.2 691.7 1169.0 653.5 1170.0 630.0C1171.0 606.5 1172.3 575.7 1173.3 549.0C1174.3 522.3 1175.1 489.6 1176.0 470.0C1176.9 450.4 1178.0 431.4 1178.9 431.4C1179.8 431.4 1180.7 453.9 1181.5 470.0C1182.3 486.1 1183.1 507.2 1184.0 528.0C1184.9 548.8 1186.0 578.0 1187.0 595.0C1188.0 612.0 1188.8 630.5 1189.8 629.7C1190.8 628.9 1192.0 608.3 1193.0 590.0C1194.0 571.7 1194.8 543.3 1196.0 520.0C1197.2 496.7 1198.7 467.2 1200.0 450.0C1201.3 432.8 1202.7 418.2 1204.0 416.5C1205.3 414.8 1206.7 431.2 1208.0 440.0C1209.3 448.8 1210.5 452.6 1212.0 469.0C1213.5 485.4 1215.3 517.6 1217.0 538.6C1218.7 559.6 1220.2 580.4 1222.0 595.0C1223.8 609.6 1226.1 626.5 1228.0 626.5C1229.9 626.5 1231.7 609.6 1233.5 595.0C1235.3 580.4 1236.6 571.1 1238.6 538.6C1240.5 506.1 1243.4 429.4 1245.2 400.0C1247.0 370.6 1248.0 370.7 1249.5 362.0C1251.0 353.3 1252.7 347.3 1254.0 347.8C1255.3 348.3 1256.5 356.3 1257.5 365.0C1258.5 373.7 1258.9 372.0 1260.0 400.0C1261.1 428.0 1262.5 498.0 1264.0 533.0C1265.5 568.0 1267.2 592.3 1269.0 610.0C1270.8 627.7 1272.8 639.0 1274.8 639.0C1276.8 639.0 1279.0 623.2 1281.0 610.0C1283.0 596.8 1284.5 586.2 1286.5 560.0C1288.5 533.8 1291.4 479.7 1293.0 453.0C1294.6 426.3 1294.9 415.9 1296.0 400.0C1297.1 384.1 1298.3 357.8 1299.5 357.8C1300.7 357.8 1302.2 375.2 1303.3 400.0C1304.4 424.8 1305.1 476.4 1306.0 506.6C1306.9 536.8 1307.7 562.0 1308.7 581.0C1309.7 600.0 1310.5 623.3 1311.8 620.6C1313.1 617.9 1314.9 584.0 1316.6 565.0C1318.3 546.0 1320.2 524.3 1322.0 506.6C1323.8 488.9 1325.8 469.4 1327.3 458.6C1328.8 447.8 1329.5 438.2 1330.8 441.8C1332.1 445.4 1334.1 462.6 1335.3 480.0C1336.5 497.4 1337.1 522.1 1338.0 546.5C1338.9 570.9 1339.4 602.6 1340.6 626.5C1341.8 650.4 1343.3 690.0 1344.9 690.0C1346.5 690.0 1348.3 645.3 1350.0 626.5C1351.7 607.7 1353.7 579.5 1355.3 577.2C1356.9 575.0 1358.2 600.4 1359.8 613.0C1361.4 625.6 1363.2 659.7 1364.9 653.0C1366.6 646.3 1368.5 599.7 1370.0 573.0C1371.5 546.3 1372.9 515.2 1374.0 493.0C1375.1 470.8 1375.5 455.5 1376.6 440.0C1377.7 424.5 1378.6 411.8 1380.6 400.0C1382.5 388.2 1386.1 369.0 1388.3 369.0C1390.5 369.0 1392.4 389.9 1394.0 400.0C1395.6 410.1 1396.7 422.6 1398.0 429.3C1399.3 436.0 1400.2 437.9 1402.0 440.0C1403.8 442.1 1406.6 439.1 1408.6 441.8C1410.6 444.5 1412.0 450.1 1414.0 456.0C1416.0 461.9 1418.4 472.4 1420.6 477.3C1422.8 482.2 1425.2 481.4 1427.2 485.3C1429.2 489.2 1431.0 492.1 1432.6 501.0C1434.2 509.9 1435.4 525.3 1436.6 538.6C1437.8 551.9 1438.7 570.0 1439.7 581.0C1440.7 592.0 1441.4 607.3 1442.4 604.6C1443.4 601.9 1444.7 583.6 1445.9 565.0C1447.2 546.4 1448.7 513.8 1449.9 493.0C1451.1 472.2 1451.9 454.0 1453.0 440.0C1454.1 426.0 1455.4 416.5 1456.7 408.8C1458.0 401.1 1459.7 393.8 1461.1 393.8C1462.5 393.8 1463.8 401.1 1464.9 408.8C1466.0 416.5 1467.0 428.1 1467.9 440.0C1468.8 451.9 1469.4 462.2 1470.2 480.0C1471.0 497.8 1471.5 521.0 1472.5 546.5C1473.5 572.0 1475.4 618.6 1476.0 633.0" stroke="#0000f5" stroke-width="2"/><path d="M1113.0 581.0C1113.6 569.2 1115.2 533.5 1116.5 510.0C1117.8 486.5 1119.5 454.7 1121.0 440.0C1122.5 425.3 1124.0 421.8 1125.3 421.8C1126.6 421.8 1127.7 433.0 1129.0 440.0C1130.3 447.0 1131.5 457.8 1133.3 464.0C1135.1 470.2 1137.8 474.5 1140.0 477.3C1142.2 480.1 1144.5 477.7 1146.6 481.0C1148.7 484.3 1150.7 502.0 1152.5 497.3C1154.3 492.6 1156.1 469.2 1157.3 453.0C1158.5 436.8 1158.7 424.0 1159.5 400.0C1160.3 376.0 1161.2 336.5 1162.2 309.0C1163.2 281.5 1164.3 255.9 1165.2 235.0C1166.1 214.1 1166.7 183.6 1167.4 183.6C1168.2 183.6 1168.9 214.1 1169.7 235.0C1170.5 255.9 1171.1 278.2 1172.1 309.0C1173.1 339.8 1174.5 389.1 1175.6 420.0C1176.7 450.9 1177.8 491.3 1178.9 494.6C1180.0 497.9 1180.8 462.6 1182.0 440.0C1183.2 417.4 1184.5 383.8 1185.8 359.0C1187.1 334.2 1188.5 291.0 1189.8 291.0C1191.0 291.0 1191.9 335.0 1193.3 359.0C1194.7 383.0 1196.0 415.7 1198.0 435.0C1200.0 454.3 1202.9 474.6 1205.2 474.6C1207.5 474.6 1210.4 454.3 1212.0 435.0C1213.6 415.7 1213.9 382.7 1214.9 359.0C1215.9 335.3 1217.3 312.8 1218.2 293.0C1219.1 273.2 1219.4 253.8 1220.2 240.0C1221.0 226.2 1222.0 219.3 1222.9 210.0C1223.9 200.7 1225.1 190.2 1225.9 184.0C1226.7 177.8 1227.2 175.4 1227.9 173.0C1228.6 170.6 1229.5 169.2 1230.3 169.3C1231.1 169.4 1232.1 170.4 1232.8 173.3C1233.5 176.2 1233.8 181.1 1234.3 186.6C1234.8 192.1 1235.4 198.8 1235.9 206.6C1236.4 214.4 1236.7 220.0 1237.3 233.3C1237.9 246.6 1238.8 265.6 1239.5 286.5C1240.2 307.4 1240.6 333.4 1241.8 359.0C1243.0 384.6 1244.5 418.1 1246.5 440.0C1248.5 461.9 1251.5 490.6 1253.7 490.6C1255.9 490.6 1258.2 461.9 1259.5 440.0C1260.8 418.1 1260.4 384.6 1261.2 359.0C1262.0 333.4 1263.8 304.1 1264.6 286.5C1265.4 268.9 1265.7 263.2 1266.2 253.2C1266.8 243.2 1267.3 234.4 1267.9 226.6C1268.5 218.8 1269.1 212.6 1269.9 206.6C1270.7 200.6 1271.5 194.4 1272.6 190.6C1273.7 186.8 1275.0 184.0 1276.3 184.0C1277.6 184.0 1279.1 186.8 1280.3 190.6C1281.5 194.4 1282.3 200.6 1283.2 206.6C1284.1 212.6 1285.1 219.9 1285.9 226.6C1286.7 233.3 1287.1 235.5 1287.9 246.6C1288.7 257.7 1290.1 274.5 1290.9 293.2C1291.7 311.9 1292.0 337.9 1292.8 359.0C1293.6 380.1 1294.9 404.3 1296.0 420.0C1297.1 435.7 1298.2 455.0 1299.3 453.3C1300.4 451.6 1301.5 434.1 1302.5 410.0C1303.5 385.9 1304.7 330.7 1305.4 309.0C1306.2 287.3 1306.5 294.2 1307.0 280.0C1307.5 265.8 1307.8 238.7 1308.3 224.0C1308.8 209.3 1309.7 199.1 1310.2 192.0C1310.8 184.9 1311.0 181.5 1311.6 181.5C1312.1 181.5 1312.8 184.9 1313.5 192.0C1314.2 199.1 1315.0 215.1 1315.6 224.0C1316.2 232.9 1316.4 236.0 1317.0 245.3C1317.6 254.6 1318.1 266.1 1319.0 280.0C1319.9 293.9 1320.3 311.1 1322.3 329.0C1324.3 346.9 1328.5 390.9 1331.0 387.6C1333.5 384.3 1336.0 326.9 1337.3 309.0C1338.6 291.1 1338.1 294.2 1338.8 280.0C1339.5 265.8 1340.5 238.7 1341.2 224.0C1342.0 209.3 1342.6 200.2 1343.3 192.0C1344.0 183.8 1344.6 178.6 1345.4 175.0C1346.2 171.4 1346.8 169.6 1347.9 170.2C1349.0 170.8 1350.7 176.2 1351.8 178.5C1352.9 180.8 1353.7 184.6 1354.8 184.3C1355.9 184.0 1356.9 179.1 1358.2 176.5C1359.5 173.9 1361.3 169.1 1362.5 169.0C1363.7 168.9 1364.5 172.8 1365.2 176.0C1365.9 179.2 1365.9 180.7 1366.4 188.0C1366.9 195.3 1367.8 210.1 1368.4 219.7C1369.0 229.2 1369.4 234.6 1370.0 245.3C1370.6 256.0 1370.6 260.9 1371.8 284.0C1373.0 307.1 1375.1 355.8 1377.0 384.0C1378.9 412.2 1381.1 437.2 1383.3 453.0C1385.5 468.8 1388.0 476.5 1390.0 479.0C1392.0 481.5 1393.2 471.6 1395.0 468.0C1396.8 464.4 1398.3 458.1 1400.6 457.3C1402.9 456.5 1406.2 464.1 1408.6 463.0C1411.0 461.9 1413.2 454.9 1415.2 450.6C1417.2 446.3 1418.6 440.3 1420.6 437.3C1422.6 434.3 1425.5 435.2 1427.2 432.5C1428.9 429.8 1429.7 427.4 1430.7 421.3C1431.8 415.2 1432.5 414.7 1433.5 396.0C1434.5 377.3 1435.2 340.6 1436.8 309.0C1438.4 277.4 1440.9 208.5 1443.0 206.5C1445.1 204.5 1447.5 269.3 1449.2 296.8C1450.9 324.3 1451.6 349.5 1453.0 371.4C1454.4 393.3 1456.0 415.4 1457.5 428.0C1459.0 440.6 1460.5 447.2 1461.9 447.2C1463.3 447.2 1464.8 440.7 1466.0 428.0C1467.2 415.3 1467.9 395.0 1469.0 371.0C1470.1 347.0 1471.5 315.0 1472.8 284.0C1474.1 253.0 1476.0 201.4 1476.6 184.9" stroke="#000" stroke-width="2.1"/></g><path d="M1112.5 184.0V690.5H1597.5V184.0" stroke="#000" stroke-width="1" fill="none" shape-rendering="crispEdges"/><text x="1109.3" y="692.9" font-size="10.67" text-anchor="end" fill="#000">0.0</text><text x="1600.6" y="692.9" font-size="10.67" fill="#000">0.0</text><text x="1109.3" y="591.9" font-size="10.67" text-anchor="end" fill="#000">0.2</text><text x="1600.6" y="591.9" font-size="10.67" fill="#000">0.2</text><text x="1109.3" y="490.9" font-size="10.67" text-anchor="end" fill="#000">0.4</text><text x="1600.6" y="490.9" font-size="10.67" fill="#000">0.4</text><text x="1109.3" y="389.9" font-size="10.67" text-anchor="end" fill="#000">0.6</text><text x="1600.6" y="389.9" font-size="10.67" fill="#000">0.6</text><text x="1109.3" y="288.9" font-size="10.67" text-anchor="end" fill="#000">0.8</text><text x="1600.6" y="288.9" font-size="10.67" fill="#000">0.8</text><text x="1109.3" y="186.9" font-size="10.67" text-anchor="end" fill="#000">1.0</text><text x="1600.6" y="186.9" font-size="10.67" fill="#000">1.0</text><text x="1148.5" y="705.8" font-size="10.67" text-anchor="middle" fill="#000">08:45</text><text x="1229.5" y="705.8" font-size="10.67" text-anchor="middle" fill="#000">08:50</text><text x="1309.5" y="705.8" font-size="10.67" text-anchor="middle" fill="#000">08:55</text><text x="1390.5" y="705.8" font-size="10.67" text-anchor="middle" fill="#000">09:00</text><text x="1471.5" y="705.8" font-size="10.67" text-anchor="middle" fill="#000">09:05</text><text x="1552.5" y="705.8" font-size="10.67" text-anchor="middle" fill="#000">09:10</text><rect x="1127" y="172" width="15" height="10" fill="#f00"/><text x="1154" y="180" font-size="10.67" fill="#000">SV</text><rect x="1267" y="172" width="15" height="10" fill="#00f"/><text x="1294" y="180" font-size="10.67" fill="#000">PV</text><rect x="1407" y="172" width="15" height="10" fill="#000"/><text x="1434" y="180" font-size="10.67" fill="#000">CV</text></svg>
<svg class="abs" style="left:0;top:0;pointer-events:none" width="1920" height="1126" fill="none" stroke="#dc9230" stroke-width="1.1"><path d="M485 269C565.0 269 565.0 143 645 143"/><path d="M503 486C573.5 486 573.5 433 644 433"/><path d="M815 690.5C929.5 690.5 929.5 206.8 1044 206.8"/></svg>
<svg class="abs" style="left:0;top:0" width="1920" height="1126" fill="#ffa92e"><path d="M641 138.5L653 143L641 147.5z"/><path d="M640 428.5L652 433L640 437.5z"/><path d="M1040 202.3L1052 206.8L1040 211.3z"/></svg>
<div class="abs" style="left:1911px;top:67px;width:2px;height:534px;background:#808080"></div>
<div class="abs" style="left:258px;top:1121px;width:1321px;height:2px;background:#808080"></div>
</body></html>
